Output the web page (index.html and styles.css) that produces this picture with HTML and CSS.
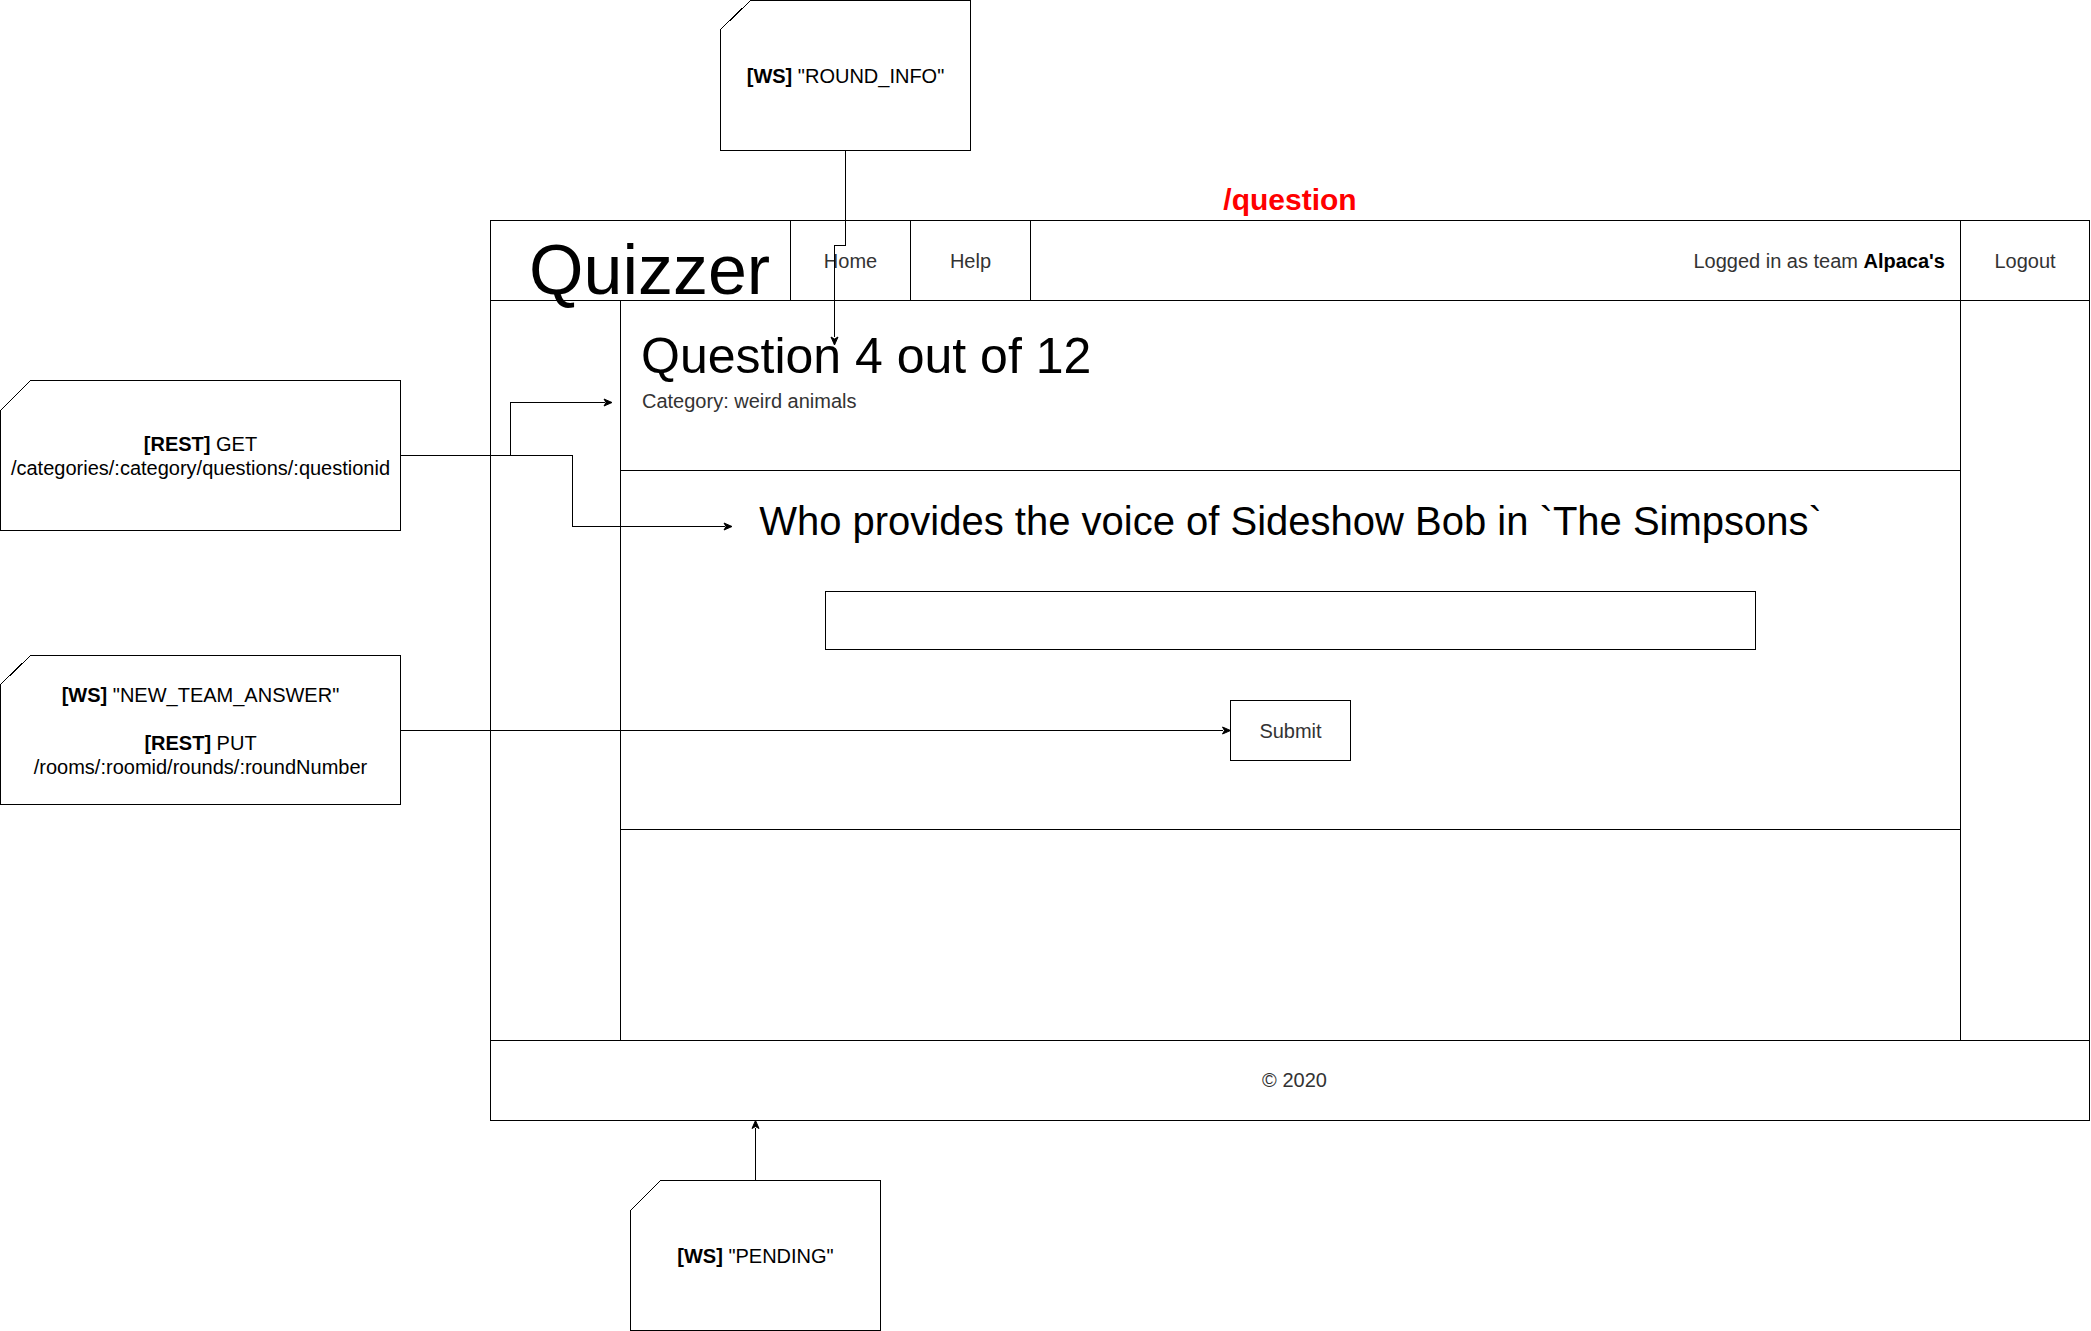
FILE: index.html
```html
<!DOCTYPE html>
<html lang="en">
<head>
<meta charset="utf-8">
<title>Quizzer – /question wireframe</title>
<link rel="stylesheet" href="styles.css">
</head>
<body>
<div class="canvas">

  <div class="note note-round">
    <svg class="note-shape" viewBox="0 0 251 151" width="251" height="151"><path d="M0.5 29.5 L30.5 0.5 H250.5 V150.5 H0.5 Z"/></svg>
    <div class="note-text"><b>[WS]</b> "ROUND_INFO"</div>
  </div>

  <div class="note note-get">
    <svg class="note-shape" viewBox="0 0 401 151" width="401" height="151"><path d="M0.5 30.5 L30.5 0.5 H400.5 V150.5 H0.5 Z"/></svg>
    <div class="note-text"><b>[REST]</b> GET<br>/categories/:category/questions/:questionid</div>
  </div>

  <div class="note note-put">
    <svg class="note-shape" viewBox="0 0 401 150" width="401" height="150"><path d="M0.5 29.5 L30.5 0.5 H400.5 V149.5 H0.5 Z"/></svg>
    <div class="note-text note-text-put"><b>[WS]</b> "NEW_TEAM_ANSWER"<br><br><b>[REST]</b> PUT<br>/rooms/:roomid/rounds/:roundNumber</div>
  </div>

  <div class="note note-pending">
    <svg class="note-shape" viewBox="0 0 251 151" width="251" height="151"><path d="M0.5 30.5 L30.5 0.5 H250.5 V150.5 H0.5 Z"/></svg>
    <div class="note-text"><b>[WS]</b> "PENDING"</div>
  </div>

  <div class="route">/question</div>

  <div class="frame">
    <header class="hdr">
      <div class="logo">Quizzer</div>
      <div class="nav">Home</div>
      <div class="nav">Help</div>
      <div class="status">Logged in as team&nbsp;<b>Alpaca's</b></div>
      <div class="logout">Logout</div>
    </header>
    <div class="body">
      <aside class="side side-left"></aside>
      <main class="main">
        <section class="sec sec-head">
          <h1 class="q-count">Question 4 out of 12</h1>
          <p class="q-cat">Category: weird animals</p>
        </section>
        <section class="sec sec-q">
          <h2 class="q-text">Who provides the voice of Sideshow Bob in `The Simpsons`</h2>
          <div class="answer"></div>
          <div class="submit">Submit</div>
        </section>
        <section class="sec sec-empty"></section>
      </main>
      <aside class="side side-right"></aside>
    </div>
    <footer class="ftr">© 2020</footer>
  </div>

  <svg class="wires" width="2091" height="1331" viewBox="0 0 2091 1331">
    <g class="lines">
      <path d="M845.5 150 V245.5 H834.5 V337"/>
      <path d="M400 455.5 H572.5 V526.5 H725"/>
      <path d="M510.5 455.5 V402.5 H605"/>
      <path d="M400 730.5 H1223"/>
      <path d="M755.5 1180 V1128"/>
    </g>
    <g class="heads">
      <path d="M834.5 345 L831 337 L834.5 339 L838 337 Z"/>
      <path d="M612 402.5 L604 399 L606 402.5 L604 406 Z"/>
      <path d="M732 526.5 L724 523 L726 526.5 L724 530 Z"/>
      <path d="M1230.5 730.5 L1222.5 727 L1224.5 730.5 L1222.5 734 Z"/>
      <path d="M755.5 1120.5 L752 1128.5 L755.5 1126.5 L759 1128.5 Z"/>
    </g>
  </svg>
</div>
</body>
</html>
```

FILE: styles.css
```css
* {
  box-sizing: border-box;
}

html,
body {
  margin: 0;
  padding: 0;
  background: #fff;
}

body {
  font-family: "Liberation Sans", Arial, Helvetica, sans-serif;
  color: #000;
}

.canvas {
  position: relative;
  width: 2091px;
  height: 1331px;
  overflow: hidden;
  background: #fff;
}

/* ---------- annotation notes (diagram nodes) ---------- */
.note {
  position: absolute;
  display: flex;
  align-items: center;
  justify-content: center;
}

.note-shape {
  position: absolute;
  left: 0;
  top: 0;
}

.note-shape path {
  fill: #fff;
  stroke: #000;
  stroke-width: 1;
  shape-rendering: crispEdges;
}

.note-text {
  position: relative;
  font-size: 20px;
  line-height: 24px;
  text-align: center;
  color: #000;
  white-space: nowrap;
}

.note-text-put {
  padding-top: 2px;
}

.note-round {
  left: 720px;
  top: 0;
  width: 251px;
  height: 151px;
}

.note-get {
  left: 0;
  top: 380px;
  width: 401px;
  height: 151px;
}

.note-put {
  left: 0;
  top: 655px;
  width: 401px;
  height: 150px;
}

.note-pending {
  left: 630px;
  top: 1180px;
  width: 251px;
  height: 151px;
}

.route {
  position: absolute;
  left: 1190px;
  top: 183px;
  width: 200px;
  text-align: center;
  font-size: 30px;
  line-height: 34px;
  font-weight: bold;
  color: #ff0000;
}

/* ---------- wireframe ---------- */
.frame {
  position: absolute;
  left: 490px;
  top: 220px;
  width: 1600px;
  height: 901px;
  border: 1px solid #000;
  display: flex;
  flex-direction: column;
  background: #fff;
}

.hdr {
  flex: none;
  display: flex;
  height: 80px;
  border-bottom: 1px solid #000;
}

.logo {
  width: 300px;
  border-right: 1px solid #000;
  padding: 14px 0 0 38px;
  font-size: 70px;
  line-height: 70px;
  white-space: nowrap;
  color: #000;
}

.nav {
  width: 120px;
  border-right: 1px solid #000;
  display: flex;
  align-items: center;
  justify-content: center;
  padding-top: 2px;
  font-size: 20px;
  color: #333;
}

.status {
  flex: 1;
  border-right: 1px solid #000;
  display: flex;
  align-items: center;
  justify-content: flex-end;
  padding: 2px 15px 0 0;
  font-size: 20px;
  color: #333;
  white-space: nowrap;
}

.status b {
  color: #000;
}

.logout {
  width: 128px;
  display: flex;
  align-items: center;
  justify-content: center;
  padding-top: 2px;
  font-size: 20px;
  color: #333;
}

.body {
  flex: none;
  display: flex;
  height: 740px;
  border-bottom: 1px solid #000;
}

.side-left {
  width: 130px;
  border-right: 1px solid #000;
}

.side-right {
  flex: 1;
}

.main {
  width: 1340px;
  border-right: 1px solid #000;
  display: flex;
  flex-direction: column;
}

.sec-head {
  height: 170px;
  border-bottom: 1px solid #000;
  padding: 26px 0 0 20px;
}

.q-count {
  margin: 0;
  font-weight: normal;
  font-size: 50px;
  line-height: 58px;
  color: #000;
}

.q-cat {
  margin: 5px 0 0 1px;
  font-size: 20px;
  line-height: 23px;
  color: #333;
}

.sec-q {
  height: 359px;
  border-bottom: 1px solid #000;
  display: flex;
  flex-direction: column;
  align-items: center;
  padding-top: 27px;
}

.q-text {
  margin: 0;
  font-weight: normal;
  font-size: 40px;
  line-height: 46px;
  color: #000;
  white-space: nowrap;
}

.answer {
  margin-top: 47px;
  width: 931px;
  height: 59px;
  border: 1px solid #000;
  background: #fff;
}

.submit {
  margin-top: 50px;
  width: 121px;
  height: 61px;
  border: 1px solid #000;
  display: flex;
  align-items: center;
  justify-content: center;
  padding-top: 2px;
  font-size: 20px;
  color: #333;
  background: #fff;
}

.sec-empty {
  flex: 1;
}

.ftr {
  flex: 1;
  display: flex;
  align-items: center;
  justify-content: center;
  padding-left: 9px;
  font-size: 20px;
  color: #333;
}

/* ---------- connectors ---------- */
.wires {
  position: absolute;
  left: 0;
  top: 0;
  pointer-events: none;
}

.wires .lines path {
  fill: none;
  stroke: #000;
  stroke-width: 1;
  shape-rendering: crispEdges;
}

.wires .heads path {
  fill: #000;
  stroke: #000;
  stroke-width: 1;
  stroke-linejoin: miter;
}
```
